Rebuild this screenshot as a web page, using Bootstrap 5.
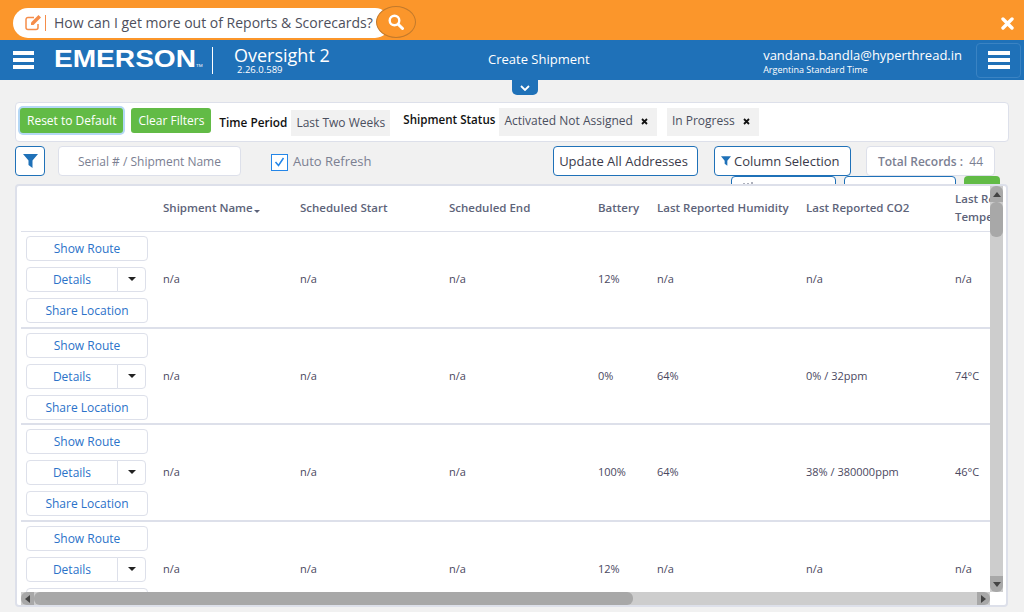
<!DOCTYPE html>
<html lang="en">
<head>
    <meta charset="UTF-8">
    <meta name="viewport" content="width=device-width, initial-scale=1.0">
    <title>Create Shipment - Oversight 2</title>
    <link href="https://cdn.jsdelivr.net/npm/bootstrap@5.3.3/dist/css/bootstrap.min.css" rel="stylesheet">
    <style>
        html, body { height: 100%; overflow: hidden; }
        body { background: #f1f1f1; font-family: "Open Sans", sans-serif; font-size: 12px; color: #4a4f63; }

        .promo-bar { height: 40px; background: #fb962b; padding: 4px 10px 0 13px; }
        .promo-pill { width: 377px; height: 30px; margin-top: 1px; background: #fff; border-radius: 15px; padding-left: 12px; font-size: 14px; color: #4d4f5c; white-space: nowrap; }
        .promo-pill svg { flex: none; }
        .promo-sep { width: 1px; height: 16px; background: #f58d4a; margin: 0 8px 0 3px; flex: none; }
        .promo-search { width: 40px; height: 32px; margin-left: -14px; margin-top: -1px; background: #fb962b; border: 1px solid #c27a2c; border-radius: 50%; }
        .promo-close { margin-top: 13px; }

        .top-header { height: 40px; background: #1f71b8; color: #fff; padding-left: 13px; }
        .burger { width: 21px; height: 18px; display: flex; flex-direction: column; justify-content: space-between; }
        .burger span { height: 4px; background: #fff; display: block; }
        .brand-block { width: 475px; }
        .emerson-mark { width: 142px; margin-left: 20px; margin-right: 1px; margin-top: 5px; font-family: "Liberation Sans", sans-serif; font-weight: 700; font-size: 24px; line-height: 24px; transform: scaleX(1.170); transform-origin: left; white-space: nowrap; }
        .emerson-tm { font-size: 4px; font-weight: 400; }
        .brand-sep { width: 1px; height: 27px; background: #fff; margin: 0 21px 0 15px; }
        .app-name { font-size: 18px; line-height: 20px; margin-top: -1px; }
        .app-version { font-size: 9.500px; line-height: 10px; margin-left: 3px; }
        .page-name { font-size: 13px; }
        .user-name { font-size: 13px; line-height: 18px; margin-top: 1px; }
        .user-zone { font-size: 9px; line-height: 12px; }
        .menu-box { width: 45px; height: 35px; margin: 0 3px 0 14px; border: 1px solid #3a83c3; border-radius: 4px; }
        .menu-box .burger { width: 22px; }
        .expand-tab { width: 26px; height: 15px; margin-left: 512px; background: #1f71b8; border-radius: 0 0 5px 5px; }

        .filter-panel { height: 40px; margin: 7px 15px 0; background: #fff; border: 1px solid #dde0ea; border-radius: 4px; padding: 5px 4px; white-space: nowrap; }
        .btn-lime { height: 25px; padding: 0 7px; background: #62bb46; border: 0; border-radius: 3px; color: #fff; font-size: 12px; line-height: 25px; }
        .btn-lime:hover { background: #62bb46; color: #fff; }
        .btn-lime.is-focused { box-shadow: 0 0 0 2px #b5d8f5; }
        .filter-label { color: #111; font-weight: 600; font-size: 11.800px; }
        .filter-chip { height: 28px; background: #f1f1f1; color: #4a4f5e; padding: 0 5px; font-size: 12px; line-height: 26px; }
        .chip-time { height: 26px; margin-top: 2px; line-height: 25px; }
        .label-time { margin-top: 6px; }
        .label-status { margin-left: 13px; margin-top: 3px; font-size: 11.600px; }
        .chip-next { margin-left: 10px; }
        .chip-x { margin-left: 8px; margin-right: 4px; }

        .tool-row { height: 30px; margin: 4px 29px 0 15px; position: relative; z-index: 1; }
        .btn-tool { height: 30px; padding: 0; background: #fff; border: 1px solid #1f71b8; border-radius: 4px; color: #3a3a4a; font-size: 13px; line-height: 28px; }
        .btn-tool:hover { background: #fff; color: #3a3a4a; }
        .btn-funnel { width: 30px; }
        .btn-update { width: 145px; padding-right: 4px; }
        .btn-columns { width: 137px; margin-left: 16px; padding-left: 6px; gap: 3px; }
        input.serial-input { width: 183px; height: 30px; margin-left: 13px; padding: 0; border: 1px solid #dde0ea; border-radius: 4px; font-size: 12px; text-align: center; background: #fff; }
        input.serial-input::placeholder { color: #7b8092; opacity: 1; }
        .refresh-box { width: 17px; height: 17px; margin: 2px 5px 0 30px; border: 1px solid #2486e8; background: #fff; }
        .refresh-label { font-size: 13px; color: #7b8092; margin-top: 2px; }
        .total-box { width: 129px; height: 30px; margin-left: 15px; background: #fff; border: 1px solid #dde0ea; border-radius: 4px; color: #7b8092; line-height: 30px; font-size: 12px; text-align: center; }
        .total-box b { font-weight: 600; }

        .hidden-row { height: 8px; margin-left: 731px; overflow: hidden; }
        .peek-btn { height: 20px; background: #fff; border: 1px solid #1f71b8; border-radius: 4px; padding: 5px 0 0 11px; }
        .peek-one { width: 105px; }
        .peek-two { width: 112px; }
        .peek-green { width: 36px; height: 20px; background: #62bb46; border-radius: 4px; }

        .grid-card { height: 423px; margin: 0 16px 0 15px; background: #fff; border: 2px solid #dde0ea; border-radius: 4px; position: relative; z-index: 2; }
        .grid-pane { height: 100%; overflow: hidden; margin: 0 3px 0 4px; }

        .scroll-y, .scroll-x { position: absolute; background: #cdcdcd; display: flex; }
        .scroll-y { top: 0; right: 3px; bottom: 13px; width: 13px; flex-direction: column; }
        .scroll-x { left: 4px; bottom: 0; width: 969px; height: 13px; }
        .scroll-btn { background: #a8a8a8; display: flex; align-items: center; justify-content: center; flex: none; }
        .scroll-y .scroll-btn { height: 16px; }
        .scroll-x .scroll-btn { width: 13px; }
        .scroll-thumb { background: #a8a8a8; border-radius: 6px; flex: none; }
        .scroll-y .scroll-thumb { height: 35px; }
        .scroll-x .scroll-thumb { width: 599px; }
        .scroll-gap { flex: 1; }
        .btn-up { border-radius: 6px 6px 0 0; }
        .btn-down { border-radius: 0 0 6px 6px; }
        .btn-left { border-radius: 6px 0 0 6px; }
        .btn-right { border-radius: 0 6px 6px 0; }

        table.shipment-grid { table-layout: fixed; width: 1525px; margin: 0; border-collapse: separate; border-spacing: 0; font-size: 11px; color: #4a4860; }
        .shipment-grid th { height: 46px; padding: 0 0 2px; border-bottom: 1px solid #dde0ea; font-weight: 600; font-size: 11.500px; line-height: 18px; color: #5d6379; vertical-align: middle; background: #fff; }
        .shipment-grid td { height: 97px; padding: 0; border-bottom: 2px solid #dde0ea; vertical-align: middle; background: #fff; }
        .shipment-grid tr:nth-child(2) td { height: 96px; }
        .sort-caret { display: inline-block; border: 3.500px solid transparent; border-top-color: #5d6379; border-bottom: 0; margin-left: 1px; vertical-align: -1px; }
        .row-actions { width: 122px; margin-left: 5px; gap: 6px; }
        .btn-row { height: 25px; width: 122px; padding: 0; background: #fff; border: 1px solid #dde0ea; border-radius: 4px; color: #2b72c9; font-size: 12px; line-height: 23px; }
        .btn-row:hover { background: #fff; color: #2b72c9; border-color: #dde0ea; }
        .btn-group.row-split { width: 121px; }
        .row-split .btn-row:first-child { width: 92px; flex: none; }
        .row-split .btn-row.dropdown-toggle-split { width: 29px; flex: none; color: #222; padding: 0; font-size: 14px; }
    </style>
</head>
<body>
    <div class="promo-bar d-flex justify-content-between">
        <div class="d-flex align-items-center">
            <div class="promo-pill d-flex align-items-center">
                <svg width="17" height="17" viewBox="0 0 17 17" fill="none">
                    <path d="M13 10v3.500a2 2 0 0 1-2 2H3a2 2 0 0 1-2-2V5.500a2 2 0 0 1 2-2h6" stroke="#f58d4a" stroke-width="1.500"/>
                    <path d="M6 8.500L13.500 1l2.500 2.500L8.500 11H6z" fill="#f58d4a"/>
                </svg>
                <span class="promo-sep"></span>
                <span>How can I get more out of Reports &amp; Scorecards?</span>
            </div>
            <div class="promo-search d-flex align-items-center justify-content-center">
                <svg width="16" height="16" viewBox="0 0 16 16" fill="none">
                    <circle cx="6.500" cy="6.500" r="4.800" stroke="#fff" stroke-width="2.400"/>
                    <path d="M10.200 10.200L14.500 14.500" stroke="#fff" stroke-width="3" stroke-linecap="round"/>
                </svg>
            </div>
        </div>
        <svg class="promo-close" width="13" height="13" viewBox="0 0 13 13">
            <path d="M2 2l9 9M11 2l-9 9" stroke="#fff" stroke-width="3.400" stroke-linecap="round"/>
        </svg>
    </div>

    <div class="top-header d-flex align-items-center">
        <div class="brand-block d-flex align-items-center">
            <div class="burger"><span></span><span></span><span></span></div>
            <div class="emerson-mark">EMERSON<span class="emerson-tm">TM</span></div>
            <div class="brand-sep"></div>
            <div>
                <div class="app-name">Oversight 2</div>
                <div class="app-version">2.26.0.589</div>
            </div>
        </div>
        <div class="page-name">Create Shipment</div>
        <div class="ms-auto">
            <div class="user-name">vandana.bandla@hyperthread.in</div>
            <div class="user-zone">Argentina Standard Time</div>
        </div>
        <div class="menu-box d-flex align-items-center justify-content-center">
            <div class="burger"><span></span><span></span><span></span></div>
        </div>
    </div>
    <div class="expand-tab d-flex align-items-center justify-content-center">
        <svg width="10" height="6" viewBox="0 0 10 6" fill="none"><path d="M1 1l4 4 4-4" stroke="#fff" stroke-width="1.800"/></svg>
    </div>

    <div class="filter-panel d-flex align-items-start">
        <button class="btn btn-lime is-focused" type="button">Reset to Default</button>
        <button class="btn btn-lime ms-2" type="button">Clear Filters</button>
        <span class="filter-label label-time ms-2">Time Period</span>
        <span class="filter-chip chip-time ms-1">Last Two Weeks</span>
        <span class="filter-label label-status">Shipment Status</span>
        <span class="filter-chip ms-1">Activated Not Assigned<svg class="chip-x" width="7" height="7" viewBox="0 0 7 7"><path d="M1 1l5 5M6 1L1 6" stroke="#111" stroke-width="1.800"/></svg></span>
        <span class="filter-chip chip-next">In Progress<svg class="chip-x" width="7" height="7" viewBox="0 0 7 7"><path d="M1 1l5 5M6 1L1 6" stroke="#111" stroke-width="1.800"/></svg></span>
    </div>

    <div class="tool-row d-flex align-items-center">
        <button class="btn btn-tool btn-funnel d-flex align-items-center justify-content-center" type="button">
            <svg width="15" height="14" viewBox="0 0 15 14"><path d="M0 0h15L9.500 6.500V14L5.500 11V6.500z" fill="#1f71b8"/></svg>
        </button>
        <input class="form-control serial-input" type="text" placeholder="Serial # / Shipment Name">
        <div class="refresh-box d-flex align-items-center justify-content-center">
            <svg width="11" height="10" viewBox="0 0 11 10" fill="none"><path d="M1.500 5l3 3.500 5-7.500" stroke="#2486e8" stroke-width="1.500"/></svg>
        </div>
        <span class="refresh-label">Auto Refresh</span>
        <button class="btn btn-tool btn-update ms-auto" type="button">Update All Addresses</button>
        <button class="btn btn-tool btn-columns d-flex align-items-center" type="button">
            <svg width="10" height="10" viewBox="0 0 15 14"><path d="M0 0h15L9.500 6.500V14L5.500 11V6.500z" fill="#1f71b8"/></svg>Column Selection
        </button>
        <div class="total-box"><b>Total Records :</b>&nbsp; 44</div>
    </div>

    <div class="hidden-row d-flex gap-2">
        <div class="peek-btn peek-one">
            <svg class="d-block" width="24" height="4" viewBox="0 0 24 4" fill="none"><path d="M1 4V1M5 4V1M9 4V0M15 3h7" stroke="#5d6379"/></svg>
        </div>
        <div class="peek-btn peek-two"></div>
        <div class="peek-green"></div>
    </div>

    <div class="grid-card">
        <div class="grid-pane">
            <table class="table shipment-grid">
                <colgroup>
                    <col style="width:142px"><col style="width:137px"><col style="width:149px"><col style="width:149px">
                    <col style="width:59px"><col style="width:149px"><col style="width:149px"><col style="width:90px"><col>
                </colgroup>
                <thead>
                    <tr>
                        <th></th>
                        <th>Shipment Name<span class="sort-caret"></span></th>
                        <th>Scheduled Start</th>
                        <th>Scheduled End</th>
                        <th>Battery</th>
                        <th>Last Reported Humidity</th>
                        <th>Last Reported CO2</th>
                        <th>Last Reported Temperature</th>
                        <th></th>
                    </tr>
                </thead>
                <tbody id="grid-body"></tbody>
            </table>
        </div>

        <div class="scroll-y">
            <div class="scroll-btn btn-up"><svg width="8" height="5" viewBox="0 0 8 5"><path d="M4 0l4 5H0z" fill="#444"/></svg></div>
            <div class="scroll-thumb"></div>
            <div class="scroll-gap"></div>
            <div class="scroll-btn btn-down"><svg width="8" height="5" viewBox="0 0 8 5"><path d="M4 5l4-5H0z" fill="#444"/></svg></div>
        </div>
        <div class="scroll-x">
            <div class="scroll-btn btn-left"><svg width="5" height="8" viewBox="0 0 5 8"><path d="M0 4l5 4V0z" fill="#444"/></svg></div>
            <div class="scroll-thumb"></div>
            <div class="scroll-gap"></div>
            <div class="scroll-btn btn-right"><svg width="5" height="8" viewBox="0 0 5 8"><path d="M5 4L0 8V0z" fill="#444"/></svg></div>
        </div>
    </div>

    <script src="https://cdn.jsdelivr.net/npm/bootstrap@5.3.3/dist/js/bootstrap.bundle.min.js"></script>
    <script>
        const shipments = [
            { battery: '12%', humidity: 'n/a', co2: 'n/a', temp: 'n/a' },
            { battery: '0%', humidity: '64%', co2: '0% / 32ppm', temp: '74°C' },
            { battery: '100%', humidity: '64%', co2: '38% / 380000ppm', temp: '46°C' },
            { battery: '12%', humidity: 'n/a', co2: 'n/a', temp: 'n/a' }
        ];
        let rows = '';
        shipments.forEach((s) => {
            rows += `<tr>
                <td>
                    <div class="row-actions d-flex flex-column">
                        <button class="btn btn-row" type="button">Show Route</button>
                        <div class="btn-group row-split">
                            <button class="btn btn-row" type="button">Details</button>
                            <button class="btn btn-row dropdown-toggle dropdown-toggle-split" type="button"></button>
                        </div>
                        <button class="btn btn-row" type="button">Share Location</button>
                    </div>
                </td>
                <td>n/a</td><td>n/a</td><td>n/a</td>
                <td>${s.battery}</td><td>${s.humidity}</td><td>${s.co2}</td><td>${s.temp}</td><td></td>
            </tr>`;
        });
        document.getElementById('grid-body').innerHTML = rows;
    </script>
</body>
</html>
